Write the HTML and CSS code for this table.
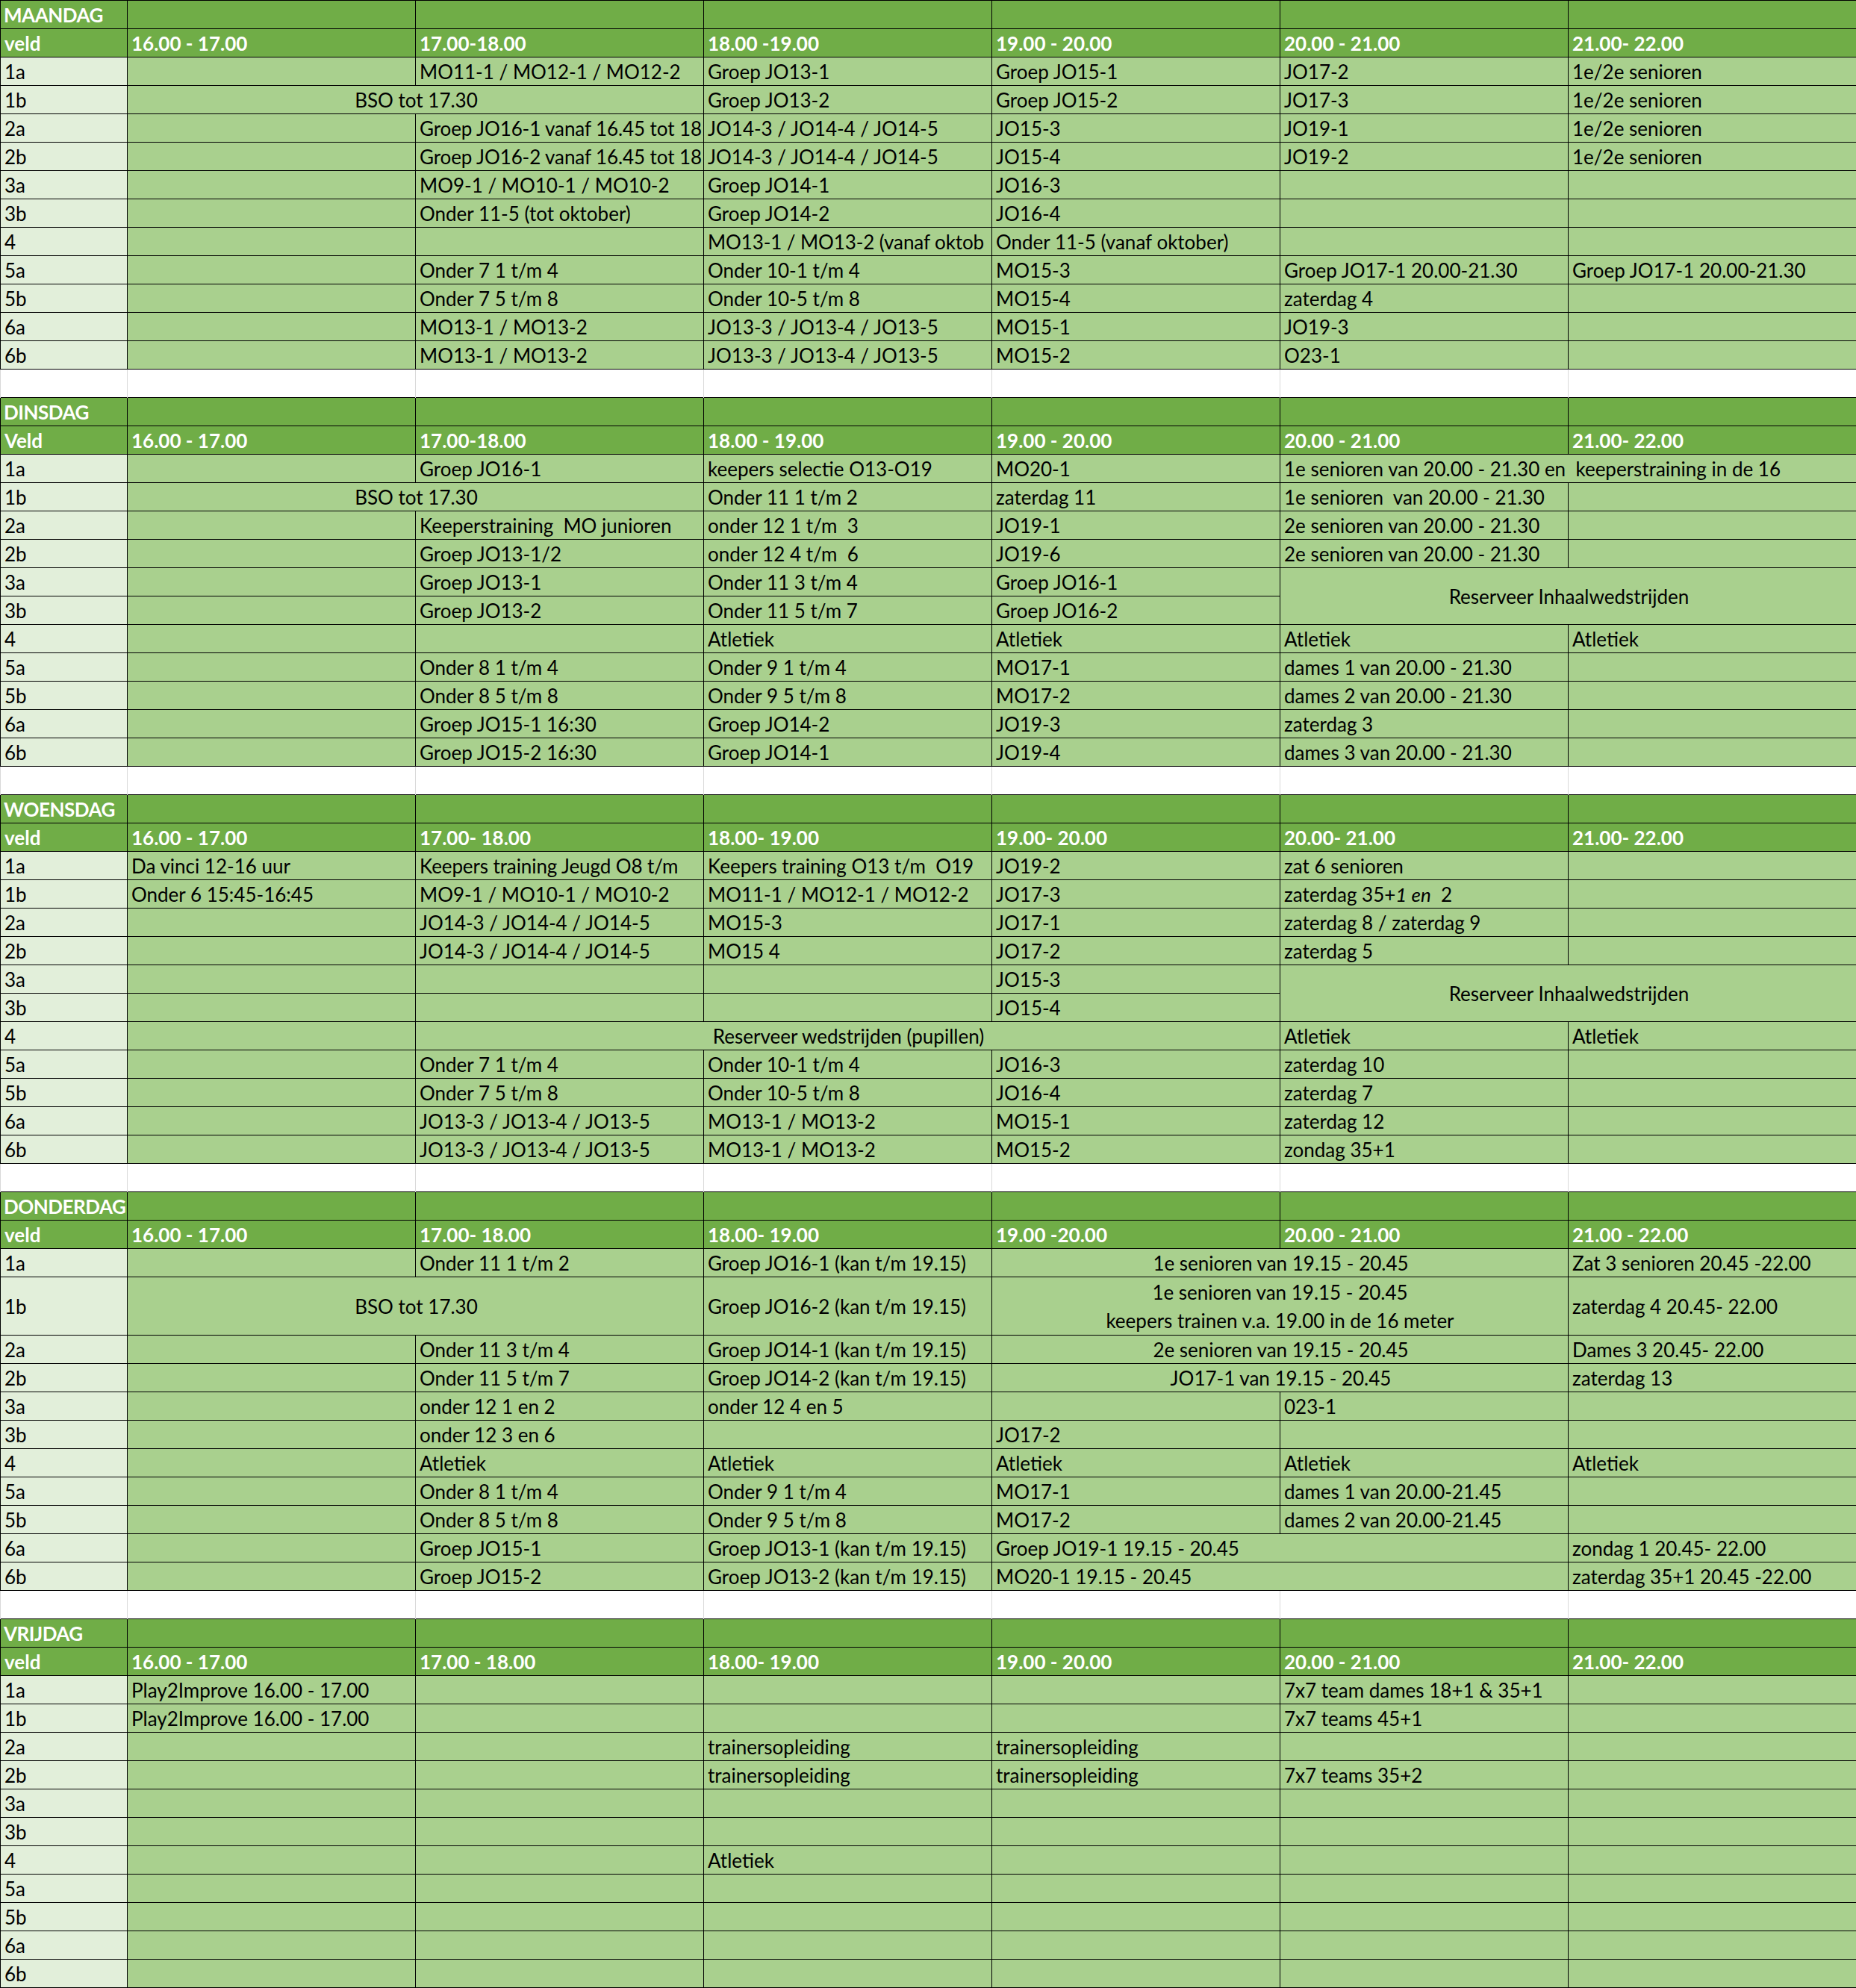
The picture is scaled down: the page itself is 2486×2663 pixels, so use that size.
FILE: index.html
```
<!DOCTYPE html>
<html lang="nl">
<head>
<meta charset="utf-8">
<title>Trainingsschema</title>
<link rel="stylesheet" href="styles.css">
</head>
<body>
<table class="sheet">
<colgroup><col class="c0"><col class="cx"><col class="cx"><col class="cx"><col class="cx"><col class="cx"><col class="cx"></colgroup>
<tbody>
<tr class="day"><td>MAANDAG</td><td></td><td></td><td></td><td></td><td></td><td></td></tr>
<tr class="hdr"><td>veld</td><td>16.00 - 17.00</td><td>17.00-18.00</td><td>18.00 -19.00</td><td>19.00 - 20.00</td><td>20.00 - 21.00</td><td>21.00- 22.00</td></tr>
<tr><td class="v">1a</td><td></td><td>MO11-1 / MO12-1 / MO12-2</td><td>Groep JO13-1</td><td>Groep JO15-1</td><td>JO17-2</td><td>1e/2e senioren</td></tr>
<tr><td class="v">1b</td><td class="c" colspan="2">BSO tot 17.30</td><td>Groep JO13-2</td><td>Groep JO15-2</td><td>JO17-3</td><td>1e/2e senioren</td></tr>
<tr><td class="v">2a</td><td></td><td class="tight">Groep JO16-1 vanaf 16.45 tot 18</td><td>JO14-3 / JO14-4 / JO14-5</td><td>JO15-3</td><td>JO19-1</td><td>1e/2e senioren</td></tr>
<tr><td class="v">2b</td><td></td><td class="tight">Groep JO16-2 vanaf 16.45 tot 18</td><td>JO14-3 / JO14-4 / JO14-5</td><td>JO15-4</td><td>JO19-2</td><td>1e/2e senioren</td></tr>
<tr><td class="v">3a</td><td></td><td>MO9-1 / MO10-1 / MO10-2</td><td>Groep JO14-1</td><td>JO16-3</td><td></td><td></td></tr>
<tr><td class="v">3b</td><td></td><td>Onder 11-5 (tot oktober)</td><td>Groep JO14-2</td><td>JO16-4</td><td></td><td></td></tr>
<tr><td class="v">4</td><td></td><td></td><td class="tight">MO13-1 / MO13-2 (vanaf oktob</td><td>Onder 11-5 (vanaf oktober)</td><td></td><td></td></tr>
<tr><td class="v">5a</td><td></td><td>Onder 7 1 t/m 4</td><td>Onder 10-1 t/m 4</td><td>MO15-3</td><td>Groep JO17-1 20.00-21.30</td><td>Groep JO17-1 20.00-21.30</td></tr>
<tr><td class="v">5b</td><td></td><td>Onder 7 5 t/m 8</td><td>Onder 10-5 t/m 8</td><td>MO15-4</td><td>zaterdag 4</td><td></td></tr>
<tr><td class="v">6a</td><td></td><td>MO13-1 / MO13-2</td><td>JO13-3 / JO13-4 / JO13-5</td><td>MO15-1</td><td>JO19-3</td><td></td></tr>
<tr><td class="v">6b</td><td></td><td>MO13-1 / MO13-2</td><td>JO13-3 / JO13-4 / JO13-5</td><td>MO15-2</td><td>O23-1</td><td></td></tr>
<tr class="gap"><td></td><td></td><td></td><td></td><td></td><td></td><td></td></tr>

<tr class="day"><td>DINSDAG</td><td></td><td></td><td></td><td></td><td></td><td></td></tr>
<tr class="hdr"><td>Veld</td><td>16.00 - 17.00</td><td>17.00-18.00</td><td>18.00 - 19.00</td><td>19.00 - 20.00</td><td>20.00 - 21.00</td><td>21.00- 22.00</td></tr>
<tr><td class="v">1a</td><td></td><td>Groep JO16-1</td><td>keepers selectie O13-O19</td><td>MO20-1</td><td colspan="2">1e senioren van 20.00 - 21.30 en  keeperstraining in de 16</td></tr>
<tr><td class="v">1b</td><td class="c" colspan="2">BSO tot 17.30</td><td>Onder 11 1 t/m 2</td><td>zaterdag 11</td><td>1e senioren  van 20.00 - 21.30</td><td></td></tr>
<tr><td class="v">2a</td><td></td><td>Keeperstraining  MO junioren</td><td>onder 12 1 t/m  3</td><td>JO19-1</td><td>2e senioren van 20.00 - 21.30</td><td></td></tr>
<tr><td class="v">2b</td><td></td><td>Groep JO13-1/2</td><td>onder 12 4 t/m  6</td><td>JO19-6</td><td>2e senioren van 20.00 - 21.30</td><td></td></tr>
<tr><td class="v">3a</td><td></td><td>Groep JO13-1</td><td>Onder 11 3 t/m 4</td><td>Groep JO16-1</td><td class="c m" colspan="2" rowspan="2">Reserveer Inhaalwedstrijden</td></tr>
<tr><td class="v">3b</td><td></td><td>Groep JO13-2</td><td>Onder 11 5 t/m 7</td><td>Groep JO16-2</td></tr>
<tr><td class="v">4</td><td></td><td></td><td>Atletiek</td><td>Atletiek</td><td>Atletiek</td><td>Atletiek</td></tr>
<tr><td class="v">5a</td><td></td><td>Onder 8 1 t/m 4</td><td>Onder 9 1 t/m 4</td><td>MO17-1</td><td>dames 1 van 20.00 - 21.30</td><td></td></tr>
<tr><td class="v">5b</td><td></td><td>Onder 8 5 t/m 8</td><td>Onder 9 5 t/m 8</td><td>MO17-2</td><td>dames 2 van 20.00 - 21.30</td><td></td></tr>
<tr><td class="v">6a</td><td></td><td>Groep JO15-1 16:30</td><td>Groep JO14-2</td><td>JO19-3</td><td>zaterdag 3</td><td></td></tr>
<tr><td class="v">6b</td><td></td><td>Groep JO15-2 16:30</td><td>Groep JO14-1</td><td>JO19-4</td><td>dames 3 van 20.00 - 21.30</td><td></td></tr>
<tr class="gap"><td></td><td></td><td></td><td></td><td></td><td></td><td></td></tr>

<tr class="day"><td>WOENSDAG</td><td></td><td></td><td></td><td></td><td></td><td></td></tr>
<tr class="hdr"><td>veld</td><td>16.00 - 17.00</td><td>17.00- 18.00</td><td>18.00- 19.00</td><td>19.00- 20.00</td><td>20.00- 21.00</td><td>21.00- 22.00</td></tr>
<tr><td class="v">1a</td><td>Da vinci 12-16 uur</td><td class="tight">Keepers training Jeugd O8 t/m</td><td>Keepers training O13 t/m  O19</td><td>JO19-2</td><td>zat 6 senioren</td><td></td></tr>
<tr><td class="v">1b</td><td>Onder 6 15:45-16:45</td><td>MO9-1 / MO10-1 / MO10-2</td><td>MO11-1 / MO12-1 / MO12-2</td><td>JO17-3</td><td>zaterdag 35+<i>1 en</i>  2</td><td></td></tr>
<tr><td class="v">2a</td><td></td><td>JO14-3 / JO14-4 / JO14-5</td><td>MO15-3</td><td>JO17-1</td><td>zaterdag 8 / zaterdag 9</td><td></td></tr>
<tr><td class="v">2b</td><td></td><td>JO14-3 / JO14-4 / JO14-5</td><td>MO15 4</td><td>JO17-2</td><td>zaterdag 5</td><td></td></tr>
<tr><td class="v">3a</td><td></td><td></td><td></td><td>JO15-3</td><td class="c m" colspan="2" rowspan="2">Reserveer Inhaalwedstrijden</td></tr>
<tr><td class="v">3b</td><td></td><td></td><td></td><td>JO15-4</td></tr>
<tr><td class="v">4</td><td></td><td class="c" colspan="3">Reserveer wedstrijden (pupillen)</td><td>Atletiek</td><td>Atletiek</td></tr>
<tr><td class="v">5a</td><td></td><td>Onder 7 1 t/m 4</td><td>Onder 10-1 t/m 4</td><td>JO16-3</td><td>zaterdag 10</td><td></td></tr>
<tr><td class="v">5b</td><td></td><td>Onder 7 5 t/m 8</td><td>Onder 10-5 t/m 8</td><td>JO16-4</td><td>zaterdag 7</td><td></td></tr>
<tr><td class="v">6a</td><td></td><td>JO13-3 / JO13-4 / JO13-5</td><td>MO13-1 / MO13-2</td><td>MO15-1</td><td>zaterdag 12</td><td></td></tr>
<tr><td class="v">6b</td><td></td><td>JO13-3 / JO13-4 / JO13-5</td><td>MO13-1 / MO13-2</td><td>MO15-2</td><td>zondag 35+1</td><td></td></tr>
<tr class="gap"><td></td><td></td><td></td><td></td><td></td><td></td><td></td></tr>

<tr class="day"><td>DONDERDAG</td><td></td><td></td><td></td><td></td><td></td><td></td></tr>
<tr class="hdr"><td>veld</td><td>16.00 - 17.00</td><td>17.00- 18.00</td><td>18.00- 19.00</td><td>19.00 -20.00</td><td>20.00 - 21.00</td><td>21.00 - 22.00</td></tr>
<tr><td class="v">1a</td><td></td><td>Onder 11 1 t/m 2</td><td>Groep JO16-1 (kan t/m 19.15)</td><td class="c" colspan="2">1e senioren van 19.15 - 20.45</td><td>Zat 3 senioren 20.45 -22.00</td></tr>
<tr class="tall"><td class="v m">1b</td><td class="c m" colspan="2">BSO tot 17.30</td><td class="m">Groep JO16-2 (kan t/m 19.15)</td><td class="c m two" colspan="2">1e senioren van 19.15 - 20.45<br>keepers trainen v.a. 19.00 in de 16 meter</td><td class="m">zaterdag 4 20.45- 22.00</td></tr>
<tr><td class="v">2a</td><td></td><td>Onder 11 3 t/m 4</td><td>Groep JO14-1 (kan t/m 19.15)</td><td class="c" colspan="2">2e senioren van 19.15 - 20.45</td><td>Dames 3 20.45- 22.00</td></tr>
<tr><td class="v">2b</td><td></td><td>Onder 11 5 t/m 7</td><td>Groep JO14-2 (kan t/m 19.15)</td><td class="c" colspan="2">JO17-1 van 19.15 - 20.45</td><td>zaterdag 13</td></tr>
<tr><td class="v">3a</td><td></td><td>onder 12 1 en 2</td><td>onder 12 4 en 5</td><td></td><td>023-1</td><td></td></tr>
<tr><td class="v">3b</td><td></td><td>onder 12 3 en 6</td><td></td><td>JO17-2</td><td></td><td></td></tr>
<tr><td class="v">4</td><td></td><td>Atletiek</td><td>Atletiek</td><td>Atletiek</td><td>Atletiek</td><td>Atletiek</td></tr>
<tr><td class="v">5a</td><td></td><td>Onder 8 1 t/m 4</td><td>Onder 9 1 t/m 4</td><td>MO17-1</td><td>dames 1 van 20.00-21.45</td><td></td></tr>
<tr><td class="v">5b</td><td></td><td>Onder 8 5 t/m 8</td><td>Onder 9 5 t/m 8</td><td>MO17-2</td><td>dames 2 van 20.00-21.45</td><td></td></tr>
<tr><td class="v">6a</td><td></td><td>Groep JO15-1</td><td>Groep JO13-1 (kan t/m 19.15)</td><td colspan="2">Groep JO19-1 19.15 - 20.45</td><td>zondag 1 20.45- 22.00</td></tr>
<tr><td class="v">6b</td><td></td><td>Groep JO15-2</td><td>Groep JO13-2 (kan t/m 19.15)</td><td colspan="2">MO20-1 19.15 - 20.45</td><td>zaterdag 35+1 20.45 -22.00</td></tr>
<tr class="gap"><td></td><td></td><td></td><td></td><td></td><td></td><td></td></tr>

<tr class="day"><td>VRIJDAG</td><td></td><td></td><td></td><td></td><td></td><td></td></tr>
<tr class="hdr"><td>veld</td><td>16.00 - 17.00</td><td>17.00 - 18.00</td><td>18.00- 19.00</td><td>19.00 - 20.00</td><td>20.00 - 21.00</td><td>21.00- 22.00</td></tr>
<tr><td class="v">1a</td><td>Play2Improve 16.00 - 17.00</td><td></td><td></td><td></td><td>7x7 team dames 18+1 &amp; 35+1</td><td></td></tr>
<tr><td class="v">1b</td><td>Play2Improve 16.00 - 17.00</td><td></td><td></td><td></td><td>7x7 teams 45+1</td><td></td></tr>
<tr><td class="v">2a</td><td></td><td></td><td>trainersopleiding</td><td>trainersopleiding</td><td></td><td></td></tr>
<tr><td class="v">2b</td><td></td><td></td><td>trainersopleiding</td><td>trainersopleiding</td><td>7x7 teams 35+2</td><td></td></tr>
<tr><td class="v">3a</td><td></td><td></td><td></td><td></td><td></td><td></td></tr>
<tr><td class="v">3b</td><td></td><td></td><td></td><td></td><td></td><td></td></tr>
<tr><td class="v">4</td><td></td><td></td><td>Atletiek</td><td></td><td></td><td></td></tr>
<tr><td class="v">5a</td><td></td><td></td><td></td><td></td><td></td><td></td></tr>
<tr><td class="v">5b</td><td></td><td></td><td></td><td></td><td></td><td></td></tr>
<tr><td class="v">6a</td><td></td><td></td><td></td><td></td><td></td><td></td></tr>
<tr><td class="v">6b</td><td></td><td></td><td></td><td></td><td></td><td></td></tr>
</tbody>
</table>
</body>
</html>
```
FILE: styles.css
```
html, body {
  margin: 0;
  padding: 0;
  background: #ffffff;
}

body {
  font-family: Lato, "Open Sans", "Liberation Sans", sans-serif;
  font-size: 26px;
  color: #000000;
}

.sheet {
  border-collapse: collapse;
  table-layout: fixed;
  width: 2486px;
}

.sheet col.c0 { width: 170px; }
.sheet col.cx { width: 386px; }

.sheet tr { height: 38px; }
.sheet tr.tall { height: 78px; }

.sheet td {
  border: 1px solid #000000;
  background: #a9d08e;
  padding: 0 3px 3px 5px;
  line-height: 30px;
  vertical-align: bottom;
  white-space: pre;
  overflow: hidden;
  text-overflow: clip;
}

.sheet td.v { background: #e2efda; }

.sheet tr.day td,
.sheet tr.hdr td {
  background: #70ad47;
  color: #ffffff;
  font-weight: 700;
}

.sheet tr.day td:first-child {
  letter-spacing: -0.5px;
  padding-left: 4px;
  padding-right: 0;
}

.sheet td.tight { padding-right: 0; letter-spacing: -0.1px; }

.sheet tr.gap td {
  background: #ffffff;
  border-top: none;
  border-bottom: none;
  border-left: 1px solid #d9d9d9;
  border-right: 1px solid #d9d9d9;
}

.sheet td.c { text-align: center; }
.sheet td.m { vertical-align: middle; padding-bottom: 0; }
.sheet td.two { line-height: 38px; padding: 0; }
```
